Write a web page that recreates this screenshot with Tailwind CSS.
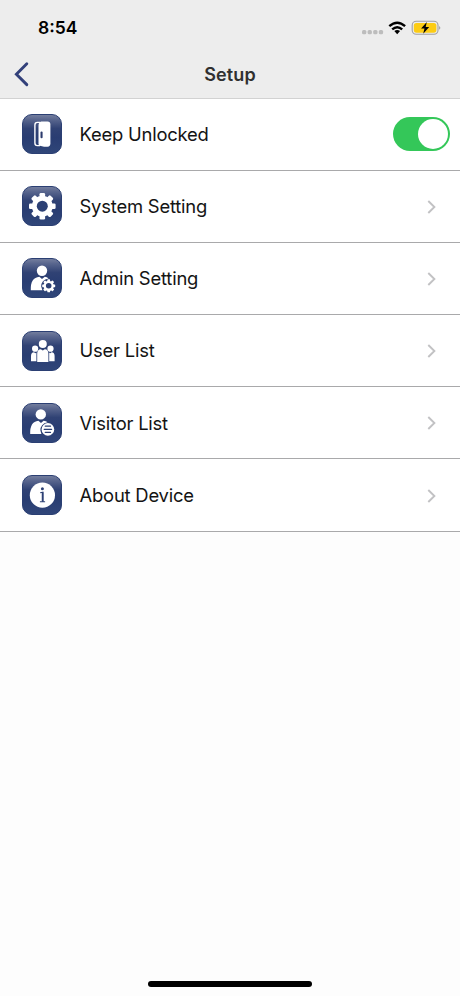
<!DOCTYPE html>
<html lang="en">
<head>
<meta charset="utf-8">
<title>Setup</title>
<script src="https://cdn.jsdelivr.net/npm/@tailwindcss/browser@4"></script>
</head>
<body class="bg-[#fdfdfd]">
<svg width="0" height="0" class="absolute">
  <defs>
    <linearGradient id="tile" x1="0" y1="0" x2="0" y2="1">
      <stop offset="0" stop-color="#76809f"/><stop offset=".13" stop-color="#59668e"/><stop offset=".36" stop-color="#304274"/><stop offset=".6" stop-color="#293d72"/><stop offset="1" stop-color="#304679"/>
    </linearGradient>
    <symbol id="base" viewBox="0 0 40 40"><rect x=".5" y=".5" width="39" height="39" rx="9.5" fill="url(#tile)" stroke="#2b3f73"/></symbol>
    <symbol id="chev" viewBox="0 0 10 16"><path d="M1.3 2 7.4 8 1.3 14" fill="none" stroke="#c2c2c4" stroke-width="1.9"/></symbol>
    <g id="teeth"><rect x="-2.8" y="-13.3" width="5.6" height="26.6" rx="1.3"/><rect x="-13.3" y="-2.8" width="26.6" height="5.6" rx="1.3"/></g>
  </defs>
</svg>
<div class="w-[460px] h-[996px] flex flex-col overflow-hidden bg-[#fdfdfd] font-['Inter','Liberation_Sans',sans-serif] text-[#141414]">
  <header class="h-[98.5px] shrink-0 bg-[#ededed] border-b border-[#d2d2d2] flex flex-col">
    <div class="h-[54px] pl-[38px] pr-[18px] pt-px flex items-center justify-between">
      <span class="pt-[2px] text-[17.5px] font-semibold tracking-[0px] text-black">8:54</span>
      <svg width="80" height="20" viewBox="0 0 80 20">
        <g fill="#bdbdbd"><rect x="0" y="12" width="4.3" height="4.3" rx="1.5"/><rect x="5.6" y="12" width="4.3" height="4.3" rx="1.5"/><rect x="11.2" y="12" width="4.3" height="4.3" rx="1.5"/><rect x="16.8" y="12" width="4.3" height="4.3" rx="1.5"/></g>
        <g fill="none" stroke="#000" stroke-width="2.4"><path d="M27.3 8.2Q35.2 1.2 43.1 8.2"/><path d="M30.2 11.4Q35.2 7 40.2 11.4"/></g>
        <path d="M32.3 13.1Q35.2 10.9 38.1 13.1L35.2 16.2Z"/>
        <rect x="50.2" y="3.3" width="25.8" height="13" rx="4" fill="#ededed" stroke="#a0a0a0" stroke-width="1.1"/>
        <rect x="51.8" y="4.9" width="22.6" height="9.8" rx="2.6" fill="#fccc14"/>
        <path d="M77.1 7.9Q79.6 9.8 77.1 11.7Z" fill="#a0a0a0"/>
        <path d="M64.8 3.9 59.1 10.5H62.5L61.2 15.8 67.2 8.9H63.7Z"/>
      </svg>
    </div>
    <div class="h-[43.5px] flex items-center">
      <svg class="ml-[13px] mt-[-4px]" width="18" height="26" viewBox="0 0 18 26"><path d="M13.8 2.8 3.4 13.2 13.8 23.6" fill="none" stroke="#32407a" stroke-width="2.9" stroke-linecap="round" stroke-linejoin="miter"/></svg>
      <h1 class="flex-1 pr-[31px] pb-[2px] text-center text-[18px] tracking-[0.1px] font-semibold text-[#303030]">Setup</h1>
    </div>
  </header>
  <main class="text-[18.4px] tracking-[-0.2px]">
    <div class="h-[72.2px] border-b border-[#a9a9ab] bg-white flex items-center pl-[22px] pr-[10px]">
      <svg width="40" height="40" viewBox="0 0 40 40"><use href="#base"/>
        <path d="M18 8.4H15.4Q12.9 8.4 12.9 11V29Q12.9 31.6 15.4 31.6H18" fill="none" stroke="#fff" stroke-width="1.4"/>
        <path d="M19.2 7.6H25.6Q28.4 7.8 28.4 10.6V29.4Q28.4 32.4 25.6 32.7H22L17.9 31.8Q16.5 31.4 16.5 29.7V11.8Q16.5 8.3 19.2 7.6Z" fill="#fff"/><rect x="18.5" y="17.4" width="2.1" height="6.8" rx="1" fill="#2c3b6d"/>
      </svg>
      <span class="ml-[17.5px] flex-1 pt-[2px]">Keep Unlocked</span>
      <span class="w-[57px] h-[34px] rounded-full bg-[#34c759] p-[2px] flex justify-end"><span class="size-[30px] rounded-full bg-white"></span></span>
    </div>
    <div class="h-[72.2px] border-b border-[#a9a9ab] bg-white flex items-center pl-[22px] pr-[23px]">
      <svg width="40" height="40" viewBox="0 0 40 40"><use href="#base"/>
        <g transform="translate(20.3 20.2)" fill="#fff"><use href="#teeth"/><use href="#teeth" transform="rotate(45)"/><circle r="10.5"/><circle r="5.5" fill="#2c4074"/></g>
      </svg>
      <span class="ml-[17.5px] flex-1 pt-[2px]">System Setting</span><svg class="mt-px" width="10" height="16"><use href="#chev"/></svg>
    </div>
    <div class="h-[72.2px] border-b border-[#a9a9ab] bg-white flex items-center pl-[22px] pr-[23px]">
      <svg width="40" height="40" viewBox="0 0 40 40"><use href="#base"/>
        <g fill="#fff"><circle cx="20" cy="12.7" r="5.2"/><path d="M8.8 32.2Q8.3 19.6 17.4 18.8L20 20.9 22.8 18.8Q25 19.2 26.6 20.4Q19 22 19.2 28.5L20.4 32.2Z"/></g>
        <g transform="translate(26.7 27.8) scale(.49)" fill="#fff"><use href="#teeth"/><use href="#teeth" transform="rotate(45)"/><circle r="10.5"/><circle r="5.7" fill="#2c4074"/></g>
      </svg>
      <span class="ml-[17.5px] flex-1 pt-px">Admin Setting</span><svg class="mt-px" width="10" height="16"><use href="#chev"/></svg>
    </div>
    <div class="h-[72.2px] border-b border-[#a9a9ab] bg-white flex items-center pl-[22px] pr-[23px]">
      <svg width="40" height="40" viewBox="0 0 40 40"><use href="#base"/>
        <g fill="#fff" transform="translate(0 .7)"><circle cx="20.8" cy="12.4" r="4"/><path d="M15.2 30.3V22Q15.2 17.7 18.8 17.5L20.8 18.8 22.8 17.5Q26.4 17.7 26.4 22V30.3Z"/>
        <circle cx="13.1" cy="17" r="3.1"/><circle cx="28.5" cy="17" r="3.1"/><path d="M9 29.6V24.2Q9 20.7 12 20.5L13.4 21.5 14.4 20.9V29.6ZM32.6 29.6V24.2Q32.6 20.7 29.6 20.5L28.2 21.5 27.2 20.9V29.6Z"/></g>
      </svg>
      <span class="ml-[17.5px] flex-1 pt-px">User List</span><svg class="mt-px" width="10" height="16"><use href="#chev"/></svg>
    </div>
    <div class="h-[72.2px] border-b border-[#a9a9ab] bg-white flex items-center pl-[22px] pr-[23px]">
      <svg width="40" height="40" viewBox="0 0 40 40"><use href="#base"/>
        <g fill="#fff"><circle cx="18.8" cy="11.4" r="5.2"/><path d="M8.2 31Q7.7 18.8 16.4 17.8L19 20.1 21.6 17.8Q24.1 18.1 25.6 19.2Q18.2 20.8 18.4 27.6L19.4 31Z"/><circle cx="25.9" cy="26.4" r="6.3"/></g>
        <path d="M23.3 23.2H28.5M22.2 26.3H29.6M23.3 29.4H28.5" stroke="#2c4074" stroke-width="1.3" fill="none" stroke-linecap="round"/>
      </svg>
      <span class="ml-[17.5px] flex-1 pt-px">Visitor List</span><svg class="mt-px" width="10" height="16"><use href="#chev"/></svg>
    </div>
    <div class="h-[72.2px] border-b border-[#a9a9ab] bg-white flex items-center pl-[22px] pr-[23px]">
      <svg width="40" height="40" viewBox="0 0 40 40"><use href="#base"/>
        <circle cx="20.4" cy="20.2" r="12.6" fill="#fff"/><circle cx="20.4" cy="13.7" r="1.5" fill="#2c4074"/>
        <path d="M18.2 17.8 20.9 17.2V26.2M17.9 26.8H23.1" fill="none" stroke="#2c4074" stroke-width="1.1"/><path d="M20.6 17.2V26.6" stroke="#2c4074" stroke-width="1.7"/>
      </svg>
      <span class="ml-[17.5px] flex-1 pt-px">About Device</span><svg class="mt-px" width="10" height="16"><use href="#chev"/></svg>
    </div>
  </main>
  <div class="mt-auto mb-[9.5px] mx-auto w-[164px] h-[5.5px] rounded-full bg-black"></div>
</div>
</body>
</html>
